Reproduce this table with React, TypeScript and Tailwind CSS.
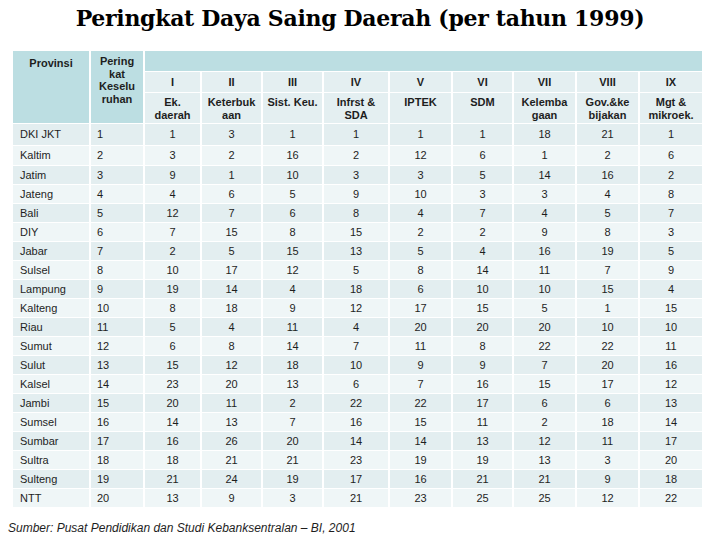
const header = [
  { num: "I", label: "Ek. daerah" },
  { num: "II", label: "Keterbuk aan" },
  { num: "III", label: "Sist. Keu." },
  { num: "IV", label: "Infrst & SDA" },
  { num: "V", label: "IPTEK" },
  { num: "VI", label: "SDM" },
  { num: "VII", label: "Kelemba gaan" },
  { num: "VIII", label: "Gov.&ke bijakan" },
  { num: "IX", label: "Mgt & mikroek." },
];

const rows: [string, number, number[]][] = [
  ["DKI JKT", 1, [1, 3, 1, 1, 1, 1, 18, 21, 1]],
  ["Kaltim", 2, [3, 2, 16, 2, 12, 6, 1, 2, 6]],
  ["Jatim", 3, [9, 1, 10, 3, 3, 5, 14, 16, 2]],
  ["Jateng", 4, [4, 6, 5, 9, 10, 3, 3, 4, 8]],
  ["Bali", 5, [12, 7, 6, 8, 4, 7, 4, 5, 7]],
  ["DIY", 6, [7, 15, 8, 15, 2, 2, 9, 8, 3]],
  ["Jabar", 7, [2, 5, 15, 13, 5, 4, 16, 19, 5]],
  ["Sulsel", 8, [10, 17, 12, 5, 8, 14, 11, 7, 9]],
  ["Lampung", 9, [19, 14, 4, 18, 6, 10, 10, 15, 4]],
  ["Kalteng", 10, [8, 18, 9, 12, 17, 15, 5, 1, 15]],
  ["Riau", 11, [5, 4, 11, 4, 20, 20, 20, 10, 10]],
  ["Sumut", 12, [6, 8, 14, 7, 11, 8, 22, 22, 11]],
  ["Sulut", 13, [15, 12, 18, 10, 9, 9, 7, 20, 16]],
  ["Kalsel", 14, [23, 20, 13, 6, 7, 16, 15, 17, 12]],
  ["Jambi", 15, [20, 11, 2, 22, 22, 17, 6, 6, 13]],
  ["Sumsel", 16, [14, 13, 7, 16, 15, 11, 2, 18, 14]],
  ["Sumbar", 17, [16, 26, 20, 14, 14, 13, 12, 11, 17]],
  ["Sultra", 18, [18, 21, 21, 23, 19, 19, 13, 3, 20]],
  ["Sulteng", 19, [21, 24, 19, 17, 16, 21, 21, 9, 18]],
  ["NTT", 20, [13, 9, 3, 21, 23, 25, 25, 12, 22]],
];

const App = () => {
  return (
    <div className="w-[720px] h-[540px] bg-white text-[#1e1e1e] font-['Liberation_Sans',Arial,sans-serif] overflow-hidden">
      <h1 className="h-[51px] pt-[3px] text-center text-[22px] leading-[30px] font-black font-['DejaVu_Serif',serif] text-black tracking-[-0.3px]">
        Peringkat Daya Saing Daerah (per tahun 1999)
      </h1>

      <div className="ml-[13px] w-[689px] grid gap-x-[2px] gap-y-[1px] grid-cols-[76px_52px_55px_59px_59px_64px_61px_59px_61px_61px_62px] grid-rows-[20px_20px_30px_21px_19px_repeat(18,18px)] text-[11px]">
        <div className="row-span-3 bg-[#bcdee2] font-bold text-center pt-[4px]">Provinsi</div>
        <div className="row-span-3 bg-[#bcdee2] font-bold text-center pt-[4px] leading-[12.5px] px-[6px]">
          Pering kat Keselu ruhan
        </div>
        <div className="col-span-9 bg-[#bcdee2]" />

        {header.map((h) => (
          <div key={h.num} className="bg-[#e4eff1] font-bold flex items-center justify-center">
            {h.num}
          </div>
        ))}
        {header.map((h) => (
          <div key={h.label} className="bg-[#e4eff1] font-bold text-center leading-[13px] pt-[3px] px-[4px]">
            {h.label}
          </div>
        ))}

        {rows.map(([name, rank, vals], i) => {
          const bg = i % 2 === 0 ? "bg-[#e3eef0]" : "bg-[#eff6f7]";
          return [
            <div key={name} className={`${bg} flex items-center pl-[7px]`}>{name}</div>,
            <div key={name + "r"} className={`${bg} flex items-center pl-[6px]`}>{rank}</div>,
            ...vals.map((v, j) => (
              <div key={name + j} className={`${bg} flex items-center justify-center`}>{v}</div>
            )),
          ];
        })}
      </div>

      <p className="mt-[12px] ml-[8px] italic text-[12px] text-[#1e1e1e]">
        Sumber: Pusat Pendidikan dan Studi Kebanksentralan – BI, 2001
      </p>
    </div>
  );
};

export default App;
